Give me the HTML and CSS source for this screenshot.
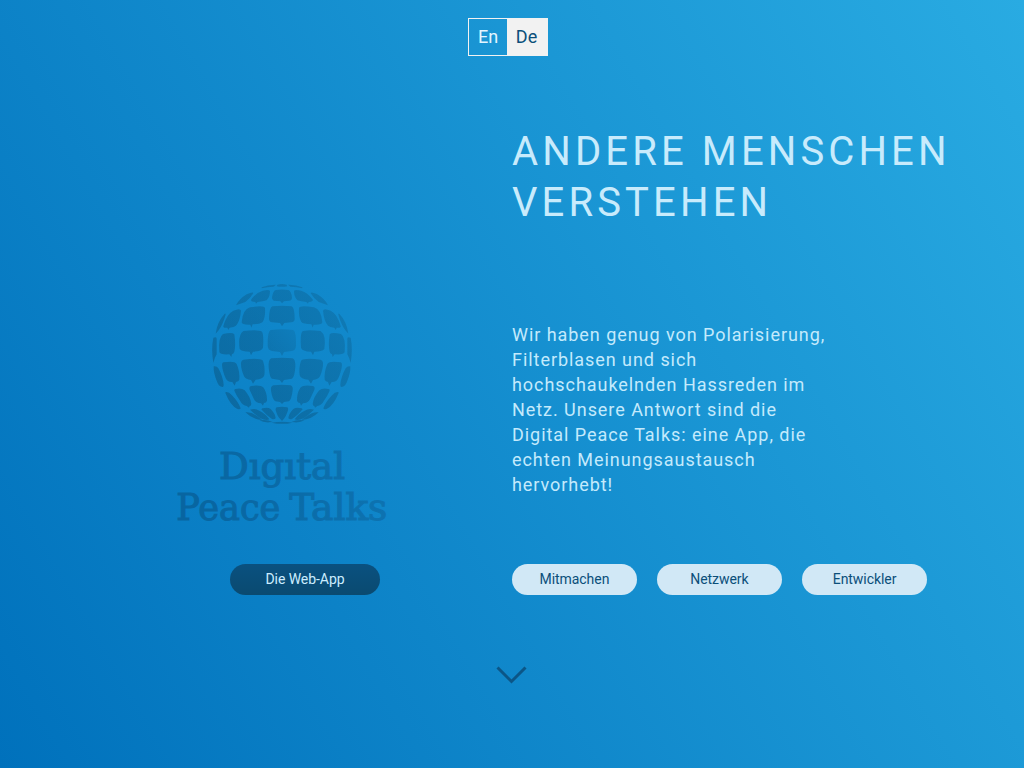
FILE: index.html
```html
<!DOCTYPE html>
<html lang="de">
<head>
<meta charset="utf-8">
<title>Digital Peace Talks</title>
<link rel="stylesheet" href="styles.css">
</head>
<body>
<div class="page">
  <nav class="lang"><a class="lang-item">En</a><a class="lang-item active">De</a></nav>
  <main class="hero">
    <div class="brand">
      <svg class="logo" width="235" height="260" viewBox="0 0 705 780">
        <defs>
          <linearGradient id="shade" gradientUnits="userSpaceOnUse" x1="90" y1="390" x2="410" y2="80">
            <stop offset="0" stop-color="#0a4e75" stop-opacity=".46"/>
            <stop offset="1" stop-color="#0a4e75" stop-opacity=".26"/>
          </linearGradient>
          <linearGradient id="shade-flip" gradientUnits="userSpaceOnUse" x1="402" y1="390" x2="82" y2="80">
            <stop offset="0" stop-color="#0a4e75" stop-opacity=".46"/>
            <stop offset="1" stop-color="#0a4e75" stop-opacity=".26"/>
          </linearGradient>
          <linearGradient id="core" gradientUnits="userSpaceOnUse" x1="205" y1="235" x2="285" y2="165">
            <stop offset="0" stop-color="#0a4e75" stop-opacity=".32"/>
            <stop offset="1" stop-color="#0a4e75" stop-opacity=".17"/>
          </linearGradient>
          <linearGradient id="ink" gradientUnits="userSpaceOnUse" x1="139" y1="0" x2="775" y2="0">
            <stop offset="0" stop-color="#074b7b"/>
            <stop offset="1" stop-color="#0d639c"/>
          </linearGradient>
          <g id="side">
            <path d="M185 37Q205 28 228 29L221 35Q202 36 185 40Z"/>
            <path d="M188 47Q208 42 210 48Q210 66 200 76Q190 80 173 81L168 86L166 81Q150 80 154 73Q170 52 188 47Z"/>
            <path d="M140 58Q160 49 160 55Q149 73 136 81L108 91Q117 72 140 58Z"/>
            <path d="M150 97Q193 89 195 99Q197 126 188 141Q183 147 158 148L154 158L151 149Q124 150 125 141Q128 104 150 97Z"/>
            <path d="M100 107Q121 98 123 107Q120 139 108 152Q103 157 89 158L85 165L82 158Q68 160 70 153Q80 117 100 107Z"/>
            <path d="M74 116Q79 113 76 122Q68 149 56 166L47 176Q52 139 74 116Z"/>
            <path d="M130 168Q176 162 186 170Q192 180 189 218Q186 229 159 230L153 241L149 230Q125 230 119 222Q113 180 130 168Z"/>
            <path d="M69 177Q97 170 103 178Q108 212 103 230Q101 237 96 238L94 246L88 238Q60 240 58 231Q54 187 69 177Z"/>
            <path d="M40 188Q50 184 50 191L50 238Q44 248 40 264Q33 222 40 188Z"/>
            <path d="M130 254Q180 248 189 257Q196 277 193 301Q190 313 167 314L159 326L153 315Q137 314 132 304Q122 280 123 263Q124 255 130 254Z"/>
            <path d="M70 262Q104 256 110 267Q120 290 118 314Q116 320 108 321L104 332L97 321Q82 322 77 310Q67 287 66 270Q66 263 70 262Z"/>
            <path d="M41 274Q50 272 55 280Q69 305 71 329Q71 339 65 335Q55 333 50 317Q40 294 41 274Z"/>
            <path d="M153 333Q182 328 191 338Q202 355 201 377Q199 384 192 384L189 392L183 385Q168 385 162 373L149 345Q146 335 153 333Z"/>
            <path d="M106 342Q124 337 134 346Q151 365 154 386Q154 393 149 393L147 398L140 393Q128 392 121 379Q109 361 103 347Q102 343 106 342Z"/>
            <path d="M77 351Q86 349 96 361Q115 381 122 400Q120 405 111 401Q92 393 76 354Z"/>
            <path d="M187 400Q204 396 212 402Q226 416 227 430Q221 435 215 431Q202 424 184 403Z"/>
            <path d="M150 404Q166 399 178 407Q198 417 208 433Q198 438 181 430Q168 421 150 404Z"/>
            <path d="M136 412Q153 409 171 423L187 435Q158 434 136 412Z"/>
            <path d="M178 436Q203 433 218 441L208 442Q190 443 178 436Z"/>
          </g>
        </defs>
        <g fill="url(#shade)">
          <use href="#side"/>
        </g>
        <g transform="translate(492 0) scale(-1 1)" fill="url(#shade-flip)">
          <use href="#side"/>
        </g>
        <g fill="url(#shade)">
          <path d="M232 29Q246 25 260 29L262 34Q246 37 230 34Z"/>
          <path d="M227 45Q246 42 265 45Q274 48 276 68Q276 76 268 77L252 79L246 85L241 79L221 77Q215 75 216 67Q219 47 227 45Z"/>
          <path d="M217 94Q246 90 275 94Q284 98 284 132Q284 141 274 142L253 144L246 154L240 144L216 142Q207 140 207 131Q208 97 217 94Z"/>
          <path fill="url(#core)" d="M212 165Q246 160 280 165Q289 170 288 212Q287 226 276 228L252 231L246 243L240 231L216 228Q203 226 203 211Q202 169 212 165Z"/>
          <path d="M214 250Q246 246 278 250Q287 254 286 276Q284 306 276 311L252 315L246 324L239 315L216 311Q209 308 206 278Q204 254 214 250Z"/>
          <path d="M220 331Q246 327 272 331Q280 334 278 346Q275 373 267 379L252 381L246 387L240 381L226 379Q217 373 213 347Q211 334 220 331Z"/>
          <path d="M230 397Q246 393 262 397Q267 401 262 412Q257 427 252 431L246 438L240 431Q234 427 229 412Q224 401 230 397Z"/>
          <path d="M214 443Q246 438 278 443Q246 450 214 443Z"/>
        </g>
        <g class="wordmark" fill="url(#ink)">
          <text x="162" y="613" textLength="378" lengthAdjust="spacingAndGlyphs">Dıgıtal</text>
          <text x="34" y="736" textLength="312" lengthAdjust="spacingAndGlyphs">Peace</text>
          <text x="373" y="736" textLength="294" lengthAdjust="spacingAndGlyphs">Talks</text>
        </g>
      </svg>
      <a class="button dark">Die Web-App</a>
    </div>
    <div class="content">
      <h1 class="title">Andere Menschen verstehen</h1>
      <p class="intro">Wir haben genug von Polarisierung, Filterblasen und sich hochschaukelnden Hassreden im Netz. Unsere Antwort sind die Digital Peace Talks: eine App, die echten Meinungsaustausch hervorhebt!</p>
      <div class="actions">
        <a class="button">Mitmachen</a>
        <a class="button">Netzwerk</a>
        <a class="button">Entwickler</a>
      </div>
    </div>
  </main>
  <svg class="arrow" width="32" height="20" viewBox="0 0 32 20"><path d="M1.5 2.5L15.5 16.5L29.5 2.5" fill="none" stroke="#0b5687" stroke-width="3"/></svg>
</div>
</body>
</html>
```

FILE: styles.css
```css
* { box-sizing: border-box; }

body {
  margin: 0;
  font-family: Roboto, sans-serif;
}

.page {
  height: 768px;
  padding-top: 18px;
  overflow: hidden;
  display: flex;
  flex-direction: column;
  background: linear-gradient(60deg, #0071bc, #29abe2);
}

.lang {
  display: flex;
  width: 80px;
  height: 38px;
  margin-left: 468px;
  border: 1px solid #f2f2f2;
  font-size: 18px;
  line-height: 36px;
  text-align: center;
  color: #e3f5ff;
}

.lang-item { width: 38px; }

.lang-item.active {
  width: 40px;
  padding-right: 1px;
  background: #f2f2f2;
  color: #0b4f7a;
}

.hero {
  display: grid;
  grid-template-columns: 512px 512px;
  height: 539px;
}

.brand {
  display: flex;
  flex-direction: column;
  justify-content: flex-end;
}

.logo {
  display: block;
  margin: 0 0 29px 200px;
  overflow: visible;
}

.wordmark {
  font-family: "DejaVu Serif Condensed", "DejaVu Serif", serif;
  font-size: 111px;
  transform: translateX(-105px);
  stroke: url(#ink);
  stroke-width: 3px;
  opacity: .48;
}

.content {
  display: flex;
  flex-direction: column;
  padding-top: 70px;
}

.title {
  margin: 0;
  font-size: 40px;
  line-height: 51px;
  font-weight: 400;
  letter-spacing: 4.13px;
  text-transform: uppercase;
  color: #c8ebfc;
}

.intro {
  width: 320px;
  margin: 94px 0 0;
  font-size: 18px;
  line-height: 25px;
  letter-spacing: .95px;
  color: #c4eafc;
}

.actions {
  display: flex;
  gap: 20.4px;
  margin-top: auto;
}

.button {
  width: 124.8px;
  height: 31px;
  border-radius: 16px;
  background: #d1e8f6;
  font-size: 14px;
  line-height: 31px;
  letter-spacing: -.05px;
  text-align: center;
  color: #0b4f7a;
}

.button:first-child { margin-right: -.2px; }

.button.dark {
  width: 150px;
  margin-left: 230px;
  background: linear-gradient(#0a5180, #0a4a70);
  color: #ccedff;
}

.arrow {
  margin: 70px 0 0 496px;
}
```
